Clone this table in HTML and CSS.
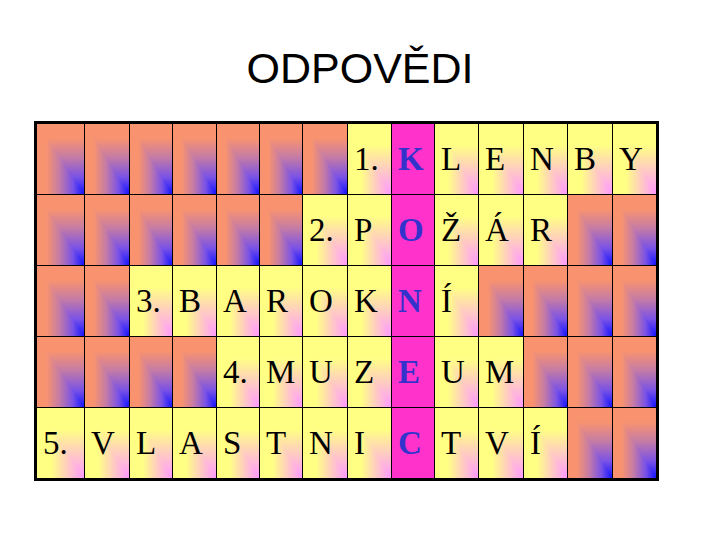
FILE: index.html
```html
<!DOCTYPE html>
<html lang="cs">
<head>
<meta charset="utf-8">
<title>Odpovědi</title>
<link rel="stylesheet" href="styles.css">
</head>
<body>
<h1 class="title">ODPOVĚDI</h1>
<div class="board">
  <!-- row 1 -->
  <div class="c o"></div><div class="c o"></div><div class="c o"></div><div class="c o"></div><div class="c o"></div><div class="c o"></div><div class="c o"></div>
  <div class="c y"><span>1.</span></div><div class="c m"><span>K</span></div>
  <div class="c y"><span>L</span></div><div class="c y"><span>E</span></div><div class="c y"><span>N</span></div><div class="c y"><span>B</span></div><div class="c y"><span>Y</span></div>
  <!-- row 2 -->
  <div class="c o"></div><div class="c o"></div><div class="c o"></div><div class="c o"></div><div class="c o"></div><div class="c o"></div>
  <div class="c y"><span>2.</span></div><div class="c y"><span>P</span></div><div class="c m"><span>O</span></div>
  <div class="c y"><span>Ž</span></div><div class="c y"><span>Á</span></div><div class="c y"><span>R</span></div>
  <div class="c o"></div><div class="c o"></div>
  <!-- row 3 -->
  <div class="c o"></div><div class="c o"></div>
  <div class="c y"><span>3.</span></div><div class="c y"><span>B</span></div><div class="c y"><span>A</span></div><div class="c y"><span>R</span></div><div class="c y"><span>O</span></div><div class="c y"><span>K</span></div>
  <div class="c m"><span>N</span></div><div class="c y"><span>Í</span></div>
  <div class="c o"></div><div class="c o"></div><div class="c o"></div><div class="c o"></div>
  <!-- row 4 -->
  <div class="c o"></div><div class="c o"></div><div class="c o"></div><div class="c o"></div>
  <div class="c y"><span>4.</span></div><div class="c y"><span>M</span></div><div class="c y"><span>U</span></div><div class="c y"><span>Z</span></div>
  <div class="c m"><span>E</span></div><div class="c y"><span>U</span></div><div class="c y"><span>M</span></div>
  <div class="c o"></div><div class="c o"></div><div class="c o"></div>
  <!-- row 5 -->
  <div class="c y"><span>5.</span></div><div class="c y"><span>V</span></div><div class="c y"><span>L</span></div><div class="c y"><span>A</span></div><div class="c y"><span>S</span></div><div class="c y"><span>T</span></div><div class="c y"><span>N</span></div><div class="c y"><span>I</span></div>
  <div class="c m"><span>C</span></div><div class="c y"><span>T</span></div><div class="c y"><span>V</span></div><div class="c y"><span>Í</span></div>
  <div class="c o"></div><div class="c o"></div>
</div>
</body>
</html>
```
FILE: styles.css
```css
html, body {
  margin: 0;
  padding: 0;
  background: #ffffff;
}

body {
  width: 720px;
  height: 540px;
  overflow: hidden;
}

.title {
  margin: 44px 0 0 0;
  height: 48px;
  line-height: 48px;
  font-family: "Liberation Sans", Arial, sans-serif;
  font-weight: normal;
  font-size: 43px;
  text-align: center;
  color: #000000;
}

.board {
  margin: 29px 0 0 34px;
  width: max-content;
  display: grid;
  grid-template-columns: 47px 44px 42px 43px 42px 42px 44px 43px 42px 43px 44px 43px 44px 43px;
  grid-auto-rows: 70px;
  gap: 1px;
  background: #000000;
  border: 3px solid #000000;
}

.c {
  position: relative;
  display: flex;
  align-items: center;
  padding-left: 6px;
  font-family: "Liberation Serif", "Times New Roman", serif;
  font-size: 33px;
  color: #000000;
  overflow: hidden;
}

.c span {
  position: relative;
  white-space: nowrap;
}

.c::before {
  content: "";
  position: absolute;
  inset: 0;
  clip-path: polygon(0 0, 100% 0, 100% 100%);
}

.o {
  background: linear-gradient(to right, #f9936f 0%, #f9936f 20%, #c47ba6 48%, #7a52e6 76%, #1414ff 100%);
}

.o::before {
  background: linear-gradient(to bottom, #f9936f 0%, #f9936f 20%, #c47ba6 48%, #7a52e6 76%, #1414ff 100%);
}

.y {
  background: linear-gradient(to right, #ffff84 0%, #ffff84 30%, #ffcdc0 64%, #ff99ff 100%);
}

.y::before {
  background: linear-gradient(to bottom, #ffff84 0%, #ffff84 30%, #ffcdc0 64%, #ff99ff 100%);
}

.m {
  background: #ff33cc;
  color: #3333cc;
  font-weight: bold;
}

.m::before {
  display: none;
}
```
